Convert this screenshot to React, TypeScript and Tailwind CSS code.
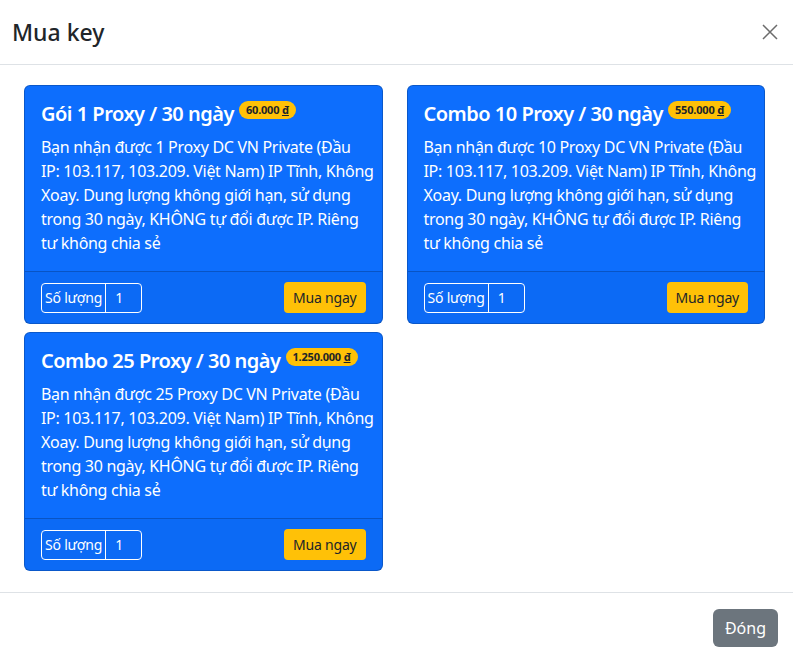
interface IPlan {
  title: string;
  price: string;
  count: number;
}

const plans: IPlan[] = [
  { title: "Gói 1 Proxy / 30 ngày", price: "60.000", count: 1 },
  { title: "Combo 10 Proxy / 30 ngày", price: "550.000", count: 10 },
  { title: "Combo 25 Proxy / 30 ngày", price: "1.250.000", count: 25 },
];

// description lines, broken where the original wraps them
const describe = (count: number) => [
  `Bạn nhận được ${count} Proxy DC VN Private (Đầu`,
  "IP: 103.117, 103.209. Việt Nam) IP Tĩnh, Không",
  "Xoay. Dung lượng không giới hạn, sử dụng",
  "trong 30 ngày, KHÔNG tự đổi được IP. Riêng",
  "tư không chia sẻ",
];

const PlanCard: React.FC<{ plan: IPlan }> = ({ plan }) => {
  return (
    <div className="flex flex-col rounded-md border border-black/20 bg-[#0d6efd] text-white">
      <div className="px-4 pt-4 pb-4">
        <div className="mb-[9px] flex items-start">
          <h5 className="text-[20px] font-semibold leading-[24px] tracking-[-0.5px]">{plan.title}</h5>
          <span className="-mt-[1px] ml-[5px] rounded-full bg-[#ffc107] px-[7px] text-[11px] font-bold leading-[18px] tracking-[-0.2px] text-[#212529]">
            {plan.price} <span className="underline">đ</span>
          </span>
        </div>
        <p className="text-[16px] leading-[24px] tracking-[-0.3px]">
          {describe(plan.count).map((line) => (
            <span key={line} className="block whitespace-nowrap">
              {line}
            </span>
          ))}
        </p>
      </div>
      <div className="flex items-center justify-between border-t border-black/20 bg-black/[0.03] px-4 py-[10px]">
        <div className="flex h-[30px] items-stretch rounded border border-white text-[14px] tracking-[-0.2px]">
          <span className="flex items-center border-r border-white px-[3px]">Số lượng</span>
          <span className="flex w-[35px] items-center px-[9px]">1</span>
        </div>
        <button className="h-[31px] rounded bg-[#ffc107] px-[9px] text-[14px] tracking-[-0.2px] text-[#212529]">
          Mua ngay
        </button>
      </div>
    </div>
  );
};

const App: React.FC = () => {
  return (
    <div className="min-h-[656px] w-[793px] bg-white font-['Noto_Sans',sans-serif] text-[#212529]">
      <div className="flex h-[65px] items-center justify-between border-b border-[#dee2e6] pl-3 pr-[14px]">
        <h1 className="text-[23px] font-medium leading-[30px]">Mua key</h1>
        <svg width="16" height="16" viewBox="0 0 16 16" className="mr-[1px]">
          <path d="M1 1L15 15M15 1L1 15" stroke="#6c6c6c" strokeWidth="1.5" fill="none" />
        </svg>
      </div>
      <div className="grid grid-cols-2 items-start gap-x-6 gap-y-2 pt-5 pr-7 pb-[21px] pl-6">
        {plans.map((plan) => (
          <PlanCard key={plan.title} plan={plan} />
        ))}
      </div>
      <div className="flex justify-end border-t border-[#dee2e6] px-[15px] pt-4 pb-[10px]">
        <button className="h-[38px] rounded-md bg-[#6c757d] px-3 text-[16px] text-white">Đóng</button>
      </div>
    </div>
  );
};

export default App;
